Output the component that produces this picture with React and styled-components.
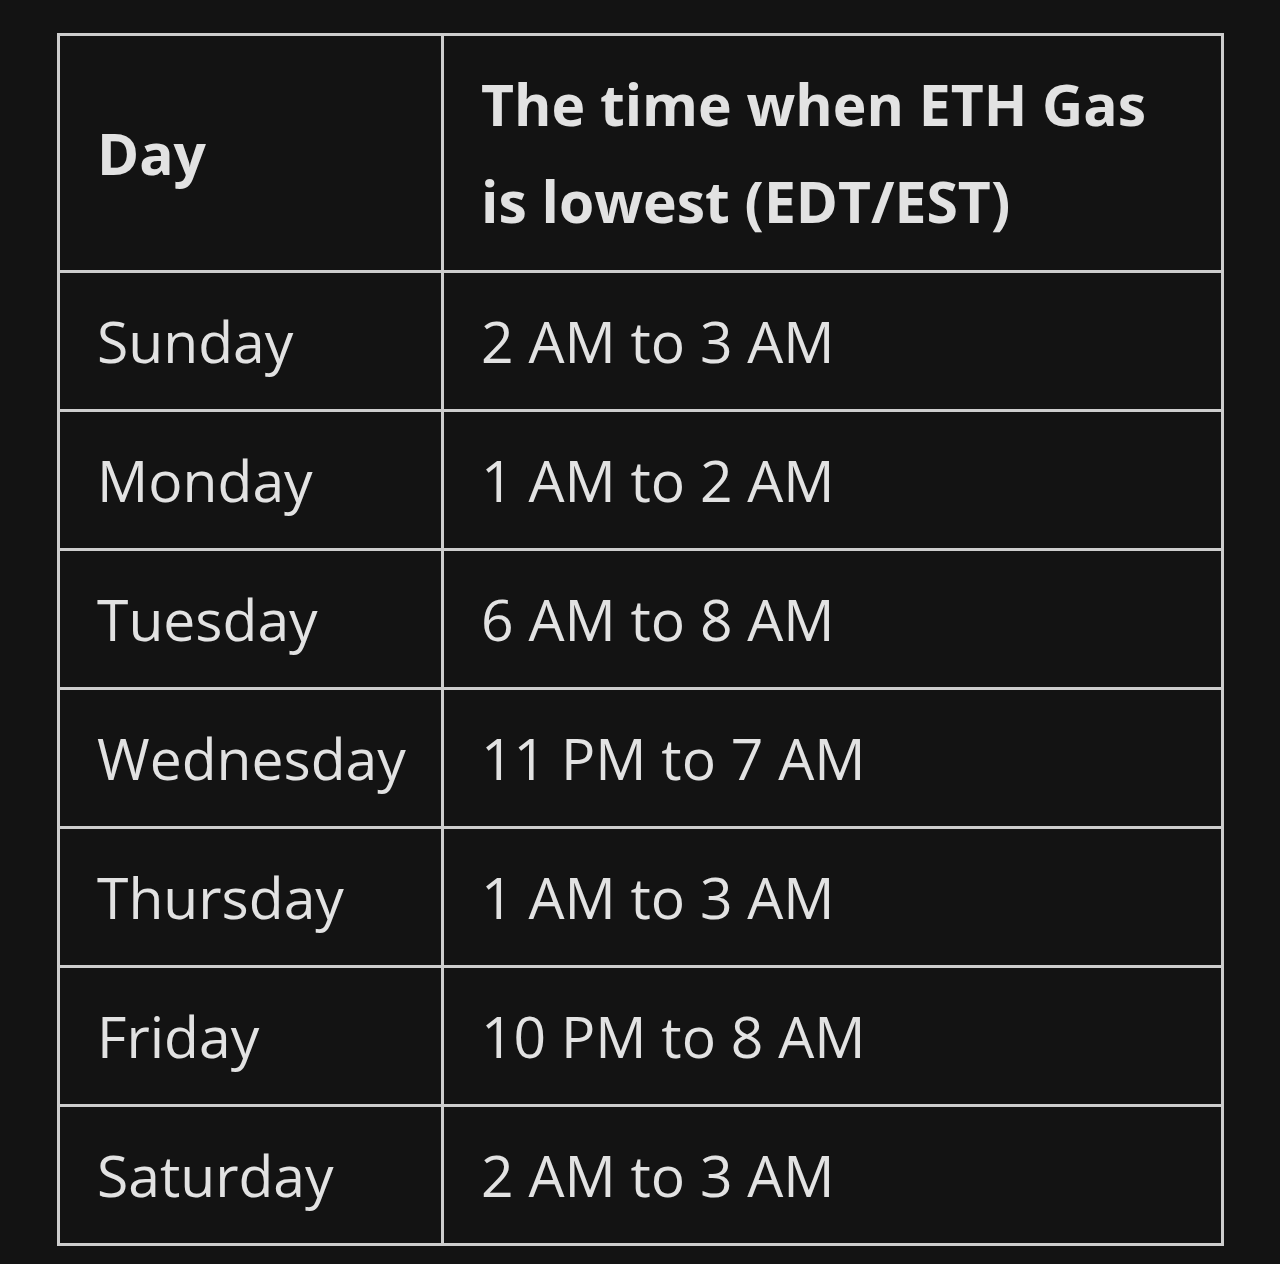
import React from "react";
import styled, { createGlobalStyle } from "styled-components";

const Global = createGlobalStyle`
  html, body { margin: 0; padding: 0; background: #131313; }
  body { font-family: "Open Sans", "Noto Sans", sans-serif; }
`;

const Page = styled.div`
  width: 1280px;
  height: 1264px;
  box-sizing: border-box;
  padding: 33px 0 0 57px;
  background: #131313;
`;

const Table = styled.table`
  width: 1167px;
  border-collapse: collapse;
  border: 3px solid #cdcdcd;
  color: #e2e2e2;
  table-layout: fixed;
`;

const Cell = styled.td`
  border: 3px solid #cdcdcd;
  padding: 0 0 0 37px;
  font-size: 57px;
  font-weight: ${(p) => (p.$head ? 700 : 400)};
  line-height: ${(p) => (p.$head ? "97px" : "1.2")};
  text-align: left;
  vertical-align: middle;
  white-space: nowrap;
  height: ${(p) => (p.$head ? "237px" : "139px")};
  box-sizing: border-box;
`;

const rows = [
  ["Sunday", "2 AM to 3 AM"],
  ["Monday", "1 AM to 2 AM"],
  ["Tuesday", "6 AM to 8 AM"],
  ["Wednesday", "11 PM to 7 AM"],
  ["Thursday", "1 AM to 3 AM"],
  ["Friday", "10 PM to 8 AM"],
  ["Saturday", "2 AM to 3 AM"],
];

export default function App() {
  return (
    <Page>
      <Global />
      <Table>
        <colgroup>
          <col style={{ width: 384 }} />
          <col />
        </colgroup>
        <thead>
          <tr>
            <Cell as="th" $head>Day</Cell>
            <Cell as="th" $head>
              The time when ETH Gas
              <br />
              is lowest (EDT/EST)
            </Cell>
          </tr>
        </thead>
        <tbody>
          {rows.map(([d, t]) => (
            <tr key={d}>
              <Cell>{d}</Cell>
              <Cell>{t}</Cell>
            </tr>
          ))}
        </tbody>
      </Table>
    </Page>
  );
}
